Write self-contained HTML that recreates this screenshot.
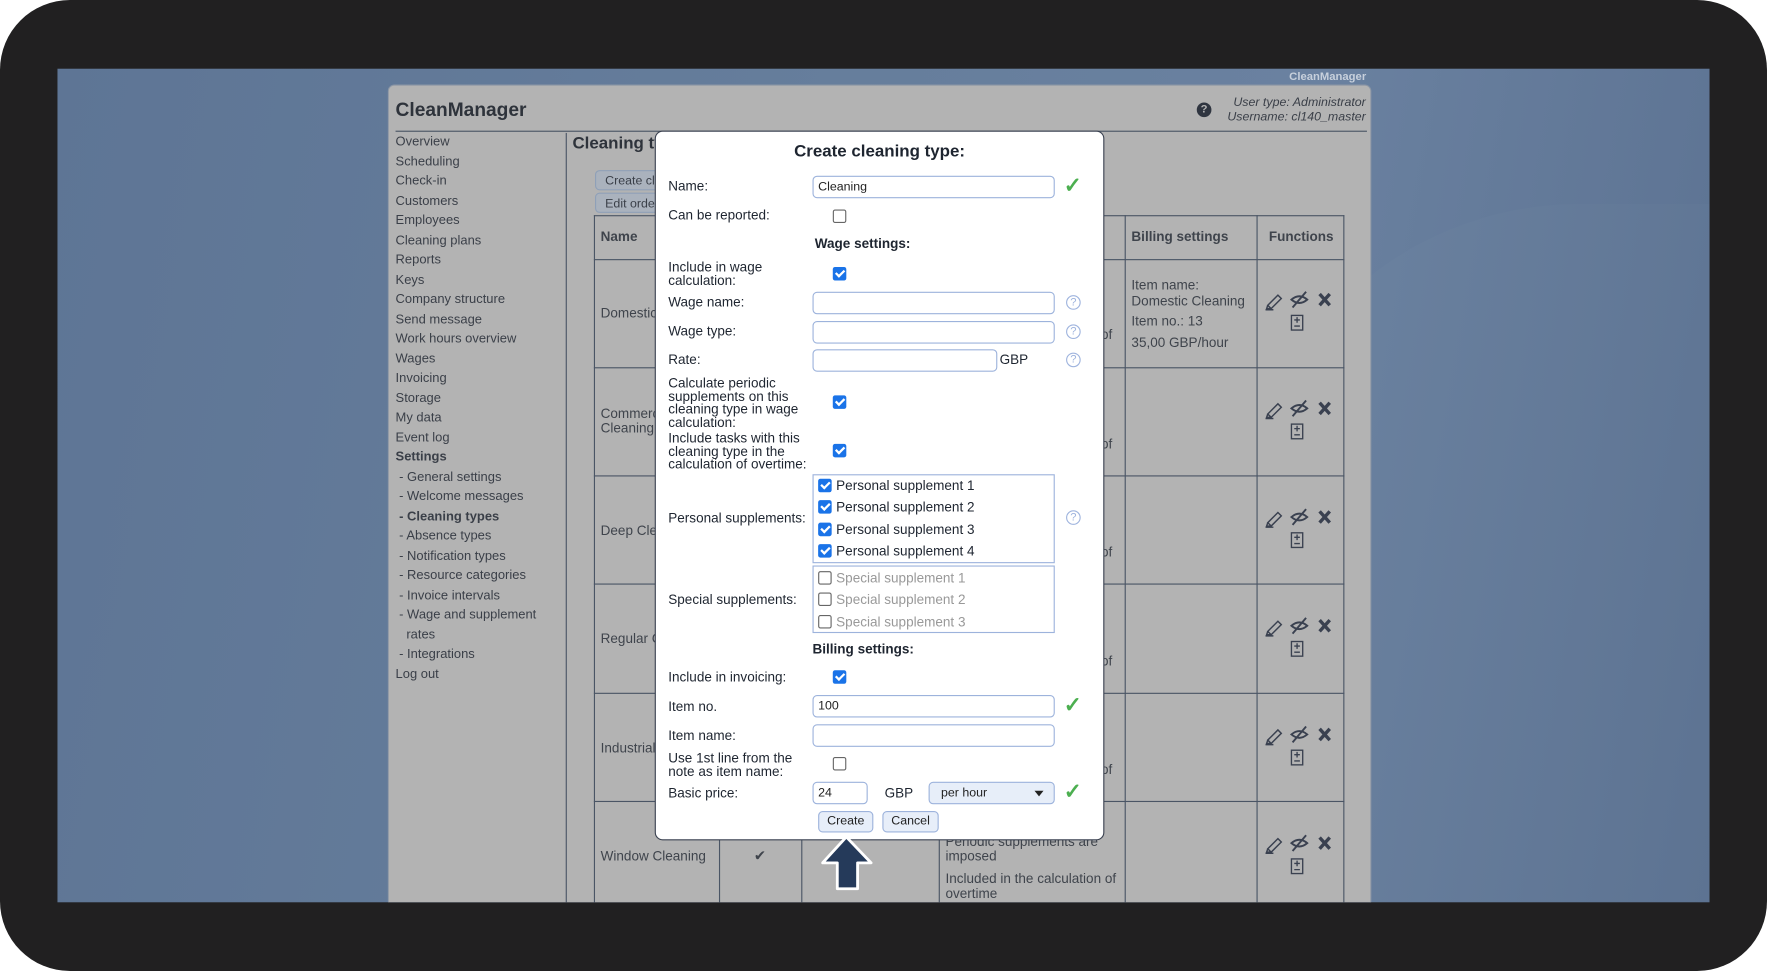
<!DOCTYPE html>
<html><head><meta charset="utf-8"><style>
*{box-sizing:border-box;margin:0;padding:0}
html,body{width:1767px;height:971px;overflow:hidden;background:#fff;font-family:"Liberation Sans",Arial,sans-serif}
#s{position:absolute;left:0;top:0;width:1568px;height:862px;transform:scale(1.12691,1.12645);transform-origin:0 0;overflow:hidden}
.a{position:absolute}
.frame{left:0;top:0;width:1568px;height:862px;background:#212021;border-radius:62px}
.blue{left:51px;top:61px;width:1466px;height:740px;background:linear-gradient(100deg,#5e7595 0%,#667e9c 45%,#6a81a0 70%,#5b7191 100%);overflow:hidden}
.panel{left:344px;top:75px;width:873px;height:726px;background:#b3b3b3;border-radius:6px 6px 0 0;border:1px solid #8b96a5;border-bottom:none}
.t{position:absolute;font-size:12px;color:#3a3f48;white-space:nowrap}
.nav div{height:17.5px;line-height:17.5px}
.line{position:absolute;background:#4a5565}
.cell{position:absolute;font-size:12px;color:#3f444c;line-height:13px;white-space:nowrap}
.modal{left:581px;top:116px;width:399px;height:630px;background:#fff;border-radius:7px;border:1px solid #3a4150}
.m{position:absolute;font-size:12px;color:#1e2530;line-height:11.6px;white-space:nowrap}
.in{position:absolute;height:20px;border:1px solid #9db3dc;border-radius:4px;background:#fff;font-size:11px;padding-left:4px;line-height:18px;color:#222}
.cb{position:absolute;width:12px;height:12px;border-radius:2px;background:#1a73e8}
.cb::after{content:"";position:absolute;left:4px;top:1px;width:3px;height:6px;border:solid #fff;border-width:0 2px 2px 0;transform:rotate(45deg)}
.cbo{position:absolute;width:12px;height:12px;border-radius:2px;border:1px solid #666;background:#fff}
.ok{position:absolute;color:#4caf50;font-size:19px;font-weight:bold;line-height:18px}
.q{position:absolute;width:13px;height:13px;border:1px solid #9fb4de;border-radius:50%;color:#9fb4de;font-size:10px;line-height:11px;text-align:center}
.box{position:absolute;border:1px solid #9db3dc}
.btn{position:absolute;height:19px;border:1px solid #9db3dc;border-radius:4px;background:#e7eef9;font-size:11px;line-height:17px;text-align:center;color:#222}
.tb{position:absolute;width:60px;height:18px;border:1px solid #8fa0b8;border-radius:4px;background:#aab2bd;font-size:11px;color:#3a3f48;padding:3px 0 0 8px;white-space:nowrap;overflow:hidden}
</style></head><body><div id="s">
<div class="a frame"></div>
<div class="a blue"><div class="a" style="left:1050px;top:120px;width:900px;height:900px;border-radius:300px 0 0 0;background:rgba(255,255,255,0.015)"></div></div>
<div class="t" style="left:1144px;top:63px;font-size:10px;font-weight:bold;color:#c7d0dc">CleanManager</div>
<div class="a panel"></div>
<div class="t" style="left:351px;top:88px;font-size:17px;font-weight:bold;color:#2e333b">CleanManager</div>
<div class="line" style="left:351px;top:116px;width:862px;height:1px"></div>
<div class="a" style="left:1062px;top:91px;width:13px;height:13px;border-radius:50%;background:#2f3540;color:#b3b3b3;font-size:10px;font-weight:bold;text-align:center;line-height:13px">?</div>
<div class="t" style="right:356px;top:85px;font-style:italic;font-size:11px;text-align:right;line-height:13px">User type: Administrator<br>Username: cl140_master</div>
<div class="t nav" style="left:351px;top:118px;font-size:11.5px">
<div>Overview</div><div>Scheduling</div><div>Check-in</div><div>Customers</div><div>Employees</div><div>Cleaning plans</div><div>Reports</div><div>Keys</div><div>Company structure</div><div>Send message</div><div>Work hours overview</div><div>Wages</div><div>Invoicing</div><div>Storage</div><div>My data</div><div>Event log</div><div style="font-weight:bold">Settings</div><div>&nbsp;- General settings</div><div>&nbsp;- Welcome messages</div><div style="font-weight:bold">&nbsp;- Cleaning types</div><div>&nbsp;- Absence types</div><div>&nbsp;- Notification types</div><div>&nbsp;- Resource categories</div><div>&nbsp;- Invoice intervals</div><div>&nbsp;- Wage and supplement</div><div>&nbsp;&nbsp;&nbsp;rates</div><div>&nbsp;- Integrations</div><div>Log out</div></div>
<div class="line" style="left:502px;top:118px;width:1px;height:683px"></div>
<div class="t" style="left:508px;top:119px;font-size:15px;font-weight:bold;color:#2e333b">Cleaning types</div>
<div class="tb" style="left:528px;top:151px">Create cleaning</div>
<div class="tb" style="left:528px;top:171px">Edit order</div>
<div class="a" style="left:527px;top:191px;width:666px;height:610px;border:1px solid #4a5565;border-bottom:none"></div>
<div class="line" style="left:638px;top:191px;width:1px;height:610px"></div>
<div class="line" style="left:711px;top:191px;width:1px;height:610px"></div>
<div class="line" style="left:833px;top:191px;width:1px;height:610px"></div>
<div class="line" style="left:998px;top:191px;width:1px;height:610px"></div>
<div class="line" style="left:1115px;top:191px;width:1px;height:610px"></div>
<div class="line" style="left:527px;top:230px;width:666px;height:1px"></div>
<div class="line" style="left:527px;top:326px;width:666px;height:1px"></div>
<div class="line" style="left:527px;top:422px;width:666px;height:1px"></div>
<div class="line" style="left:527px;top:518px;width:666px;height:1px"></div>
<div class="line" style="left:527px;top:615px;width:666px;height:1px"></div>
<div class="line" style="left:527px;top:711px;width:666px;height:1px"></div>
<div class="cell" style="left:533px;top:204px;font-weight:bold">Name</div>
<div class="cell" style="left:1004px;top:204px;font-weight:bold">Billing settings</div>
<div class="cell" style="left:1126px;top:204px;font-weight:bold">Functions</div>
<div class="cell" style="left:533px;top:272px">Domestic Cleaning</div>
<div class="cell" style="left:533px;top:361px">Commercial<br>Cleaning</div>
<div class="cell" style="left:533px;top:465px">Deep Cleaning</div>
<div class="cell" style="left:533px;top:561px">Regular Cleaning</div>
<div class="cell" style="left:533px;top:658px">Industrial</div>
<div class="cell" style="left:533px;top:754px">Window Cleaning</div>
<div class="cell" style="left:669px;top:753px;font-size:13px">✔</div>
<div class="cell" style="left:839px;top:741px;line-height:13px">Periodic supplements are<br>imposed</div>
<div class="cell" style="left:839px;top:774px;line-height:13px">Included in the calculation of<br>overtime</div>
<div class="cell" style="left:977px;top:291px">of</div><div class="cell" style="left:977px;top:388px">of</div><div class="cell" style="left:977px;top:484px">of</div><div class="cell" style="left:977px;top:581px">of</div><div class="cell" style="left:977px;top:677px">of</div>
<div class="cell" style="left:1004px;top:247px;line-height:13.5px">Item name:<br>Domestic Cleaning</div>
<div class="cell" style="left:1004px;top:279px">Item no.: 13</div>
<div class="cell" style="left:1004px;top:298px">35,00 GBP/hour</div>
<svg class="a" style="left:1115px;top:231px" width="78" height="570" viewBox="0 0 78 570">
<defs><g id="fi">
<path d="M10 40 L19 31 L22 34 L13 43 Z M10 40 L9 43 L13 43 M8 44 L15 44" fill="none" stroke="#3a4150" stroke-width="1.3"/>
<path d="M31 35 Q38 29 45 35 Q38 41 31 35 Z" fill="none" stroke="#3a4150" stroke-width="1.7"/><path d="M32 42 L44 28" stroke="#3a4150" stroke-width="1.7"/>
<path d="M56 30 L65 40 M65 30 L56 40" stroke="#3a4150" stroke-width="3"/>
<rect x="31" y="49" width="10" height="13" fill="none" stroke="#3a4150" stroke-width="1.2"/><path d="M33.5 53 H38.5 M36 50.5 V55.5 M33.5 58.5 H38.5" stroke="#3a4150" stroke-width="1.2"/>
</g></defs>
<use href="#fi" y="0"/><use href="#fi" y="96.5"/><use href="#fi" y="193"/><use href="#fi" y="289.5"/><use href="#fi" y="386"/><use href="#fi" y="482.5"/>
</svg>
<div class="a modal"></div>
<div class="m" style="left:581px;width:399px;text-align:center;top:127px;font-size:15px;font-weight:bold;line-height:16px">Create cleaning type:</div>
<div class="m" style="left:593px;top:160px">Name:</div>
<div class="in" style="left:721px;top:156px;width:215px">Cleaning</div><div class="ok" style="left:944px;top:157px">✓</div>
<div class="m" style="left:593px;top:186px">Can be reported:</div><div class="cbo" style="left:739px;top:186px"></div>
<div class="m" style="left:723px;top:211px;font-weight:bold">Wage settings:</div>
<div class="m" style="left:593px;top:232px">Include in wage<br>calculation:</div><div class="cb" style="left:739px;top:237px"></div>
<div class="m" style="left:593px;top:263px">Wage name:</div><div class="in" style="left:721px;top:259px;width:215px"></div><div class="q" style="left:946px;top:262px">?</div>
<div class="m" style="left:593px;top:289px">Wage type:</div><div class="in" style="left:721px;top:285px;width:215px"></div><div class="q" style="left:946px;top:288px">?</div>
<div class="m" style="left:593px;top:314px">Rate:</div><div class="in" style="left:721px;top:310px;width:164px"></div><div class="m" style="left:887px;top:314px">GBP</div><div class="q" style="left:946px;top:313px">?</div>
<div class="m" style="left:593px;top:335px">Calculate periodic<br>supplements on this<br>cleaning type in wage<br>calculation:</div><div class="cb" style="left:739px;top:351px"></div>
<div class="m" style="left:593px;top:384px">Include tasks with this<br>cleaning type in the<br>calculation of overtime:</div><div class="cb" style="left:739px;top:394px"></div>
<div class="box" style="left:721px;top:421px;width:215px;height:79px"></div>
<div class="cb" style="left:726px;top:425px"></div><div class="m" style="left:742px;top:426px">Personal supplement 1</div>
<div class="cb" style="left:726px;top:444px"></div><div class="m" style="left:742px;top:445px">Personal supplement 2</div>
<div class="cb" style="left:726px;top:464px"></div><div class="m" style="left:742px;top:465px">Personal supplement 3</div>
<div class="cb" style="left:726px;top:483px"></div><div class="m" style="left:742px;top:484px">Personal supplement 4</div>
<div class="m" style="left:593px;top:455px">Personal supplements:</div><div class="q" style="left:946px;top:453px">?</div>
<div class="box" style="left:721px;top:502px;width:215px;height:60px"></div>
<div class="cbo" style="left:726px;top:507px"></div><div class="m" style="left:742px;top:508px;color:#999">Special supplement 1</div>
<div class="cbo" style="left:726px;top:526px"></div><div class="m" style="left:742px;top:527px;color:#999">Special supplement 2</div>
<div class="cbo" style="left:726px;top:546px"></div><div class="m" style="left:742px;top:547px;color:#999">Special supplement 3</div>
<div class="m" style="left:593px;top:527px">Special supplements:</div>
<div class="m" style="left:721px;top:571px;font-weight:bold">Billing settings:</div>
<div class="m" style="left:593px;top:596px">Include in invoicing:</div><div class="cb" style="left:739px;top:595px"></div>
<div class="m" style="left:593px;top:622px">Item no.</div><div class="in" style="left:721px;top:617px;width:215px">100</div><div class="ok" style="left:944px;top:618px">✓</div>
<div class="m" style="left:593px;top:648px">Item name:</div><div class="in" style="left:721px;top:643px;width:215px"></div>
<div class="m" style="left:593px;top:668px">Use 1st line from the<br>note as item name:</div><div class="cbo" style="left:739px;top:672px"></div>
<div class="m" style="left:593px;top:699px">Basic price:</div><div class="in" style="left:721px;top:694px;width:49px">24</div>
<div class="m" style="left:785px;top:699px">GBP</div>
<div class="in" style="left:824px;top:694px;width:112px;background:#e7eef9;padding-left:10px">per hour<span style="position:absolute;right:9px;top:7px;border:4px solid transparent;border-top:5px solid #222;border-bottom:none"></span></div>
<div class="ok" style="left:944px;top:695px">✓</div>
<div class="btn" style="left:726px;top:720px;width:49px">Create</div>
<div class="btn" style="left:783px;top:720px;width:50px">Cancel</div>
<svg class="a" style="left:725px;top:740px" width="54" height="54" viewBox="0 0 54 54"><path d="M26 3 L48 26 L36 26 L36 49 L18 49 L18 26 L5 26 Z" fill="#253a5a" stroke="#fff" stroke-width="2.5" stroke-linejoin="round"/></svg>
</div></body></html>
